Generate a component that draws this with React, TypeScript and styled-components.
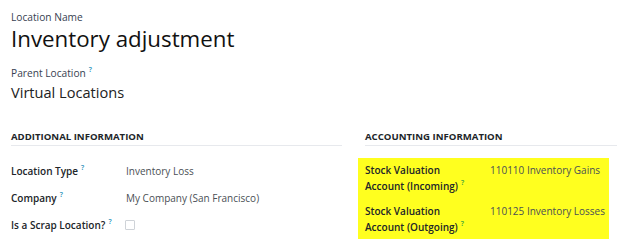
import React from 'react';
import styled, { createGlobalStyle } from 'styled-components';

const GlobalStyle = createGlobalStyle`
  body {
    margin: 0;
    background: #ffffff;
    font-family: "Open Sans", "Noto Sans", sans-serif;
    color: #212529;
  }
`;

const Sheet = styled.div`
  padding: 10px 0 0 11px;
  width: 617px;
  box-sizing: border-box;
`;

const SmallLabel = styled.div`
  font-size: 10.2px;
  font-weight: 500;
  color: #374151;
  line-height: 14px;
`;

const Title = styled.h1`
  margin: 1px 0 0 0;
  font-size: 22.3px;
  font-weight: 400;
  line-height: 28px;
  color: #111;
`;

const ParentLabel = styled(SmallLabel)`
  margin-top: 13px;
`;

const Subtitle = styled.div`
  margin-top: 2px;
  font-size: 14.6px;
  line-height: 20px;
  color: #222;
`;

const Columns = styled.div`
  display: grid;
  grid-template-columns: 331px 1fr;
  column-gap: 23px;
  margin-top: 28px;
`;

const Group = styled.section`
  display: flex;
  flex-direction: column;
`;

const GroupTitle = styled.div`
  font-size: 9.6px;
  font-weight: 700;
  text-transform: uppercase;
  color: #212529;
  line-height: 14px;
  padding-bottom: 1px;
  border-bottom: 1px solid #e7e9ed;
`;

const Fields = styled.div<{ $highlight?: boolean }>`
  display: flex;
  flex-direction: column;
  gap: ${(p) => (p.$highlight ? '9px' : '11px')};
  margin-top: ${(p) => (p.$highlight ? '12px' : '17px')};
  margin-left: ${(p) => (p.$highlight ? '-7px' : '0')};
  padding: ${(p) => (p.$highlight ? '4px 7px 4px 7px' : '0')};
  background: ${(p) => (p.$highlight ? '#ffff1f' : 'transparent')};
  width: ${(p) => (p.$highlight ? '251px' : 'auto')};
  box-sizing: border-box;
`;

const Field = styled.div<{ $labelWidth: number }>`
  display: grid;
  grid-template-columns: ${(p) => p.$labelWidth}px 1fr;
  align-items: start;
  min-height: 16px;
`;

const FieldLabel = styled.div`
  font-size: 10px;
  font-weight: 600;
  line-height: 16px;
  color: #212529;
  white-space: nowrap;
`;

const Help = styled.sup`
  font-size: 7px;
  font-weight: 600;
  color: #2a8fb8;
  margin-left: 3px;
  vertical-align: top;
  position: relative;
  top: -3px;
`;

const GreenHelp = styled(Help)`
  color: #3aa33c;
`;

const FieldValue = styled.div`
  font-size: 10px;
  line-height: 16px;
  color: #4a4f55;
  white-space: nowrap;
`;

const Checkbox = styled.span`
  display: block;
  width: 10px;
  height: 10px;
  box-sizing: border-box;
  border: 1px solid #cfd3d8;
  border-radius: 1px;
  margin: 3px 0 0 -1px;
`;

export default function App() {
  return (
    <>
      <GlobalStyle />
      <Sheet>
        <SmallLabel>Location Name</SmallLabel>
        <Title>Inventory adjustment</Title>
        <ParentLabel>
          Parent Location<Help>?</Help>
        </ParentLabel>
        <Subtitle>Virtual Locations</Subtitle>

        <Columns>
          <Group>
            <GroupTitle>Additional Information</GroupTitle>
            <Fields>
              <Field $labelWidth={115}>
                <FieldLabel>
                  Location Type<Help>?</Help>
                </FieldLabel>
                <FieldValue>Inventory Loss</FieldValue>
              </Field>
              <Field $labelWidth={115}>
                <FieldLabel>
                  Company<Help>?</Help>
                </FieldLabel>
                <FieldValue>My Company (San Francisco)</FieldValue>
              </Field>
              <Field $labelWidth={115}>
                <FieldLabel>
                  Is a Scrap Location?<Help>?</Help>
                </FieldLabel>
                <FieldValue>
                  <Checkbox />
                </FieldValue>
              </Field>
            </Fields>
          </Group>

          <Group>
            <GroupTitle>Accounting Information</GroupTitle>
            <Fields $highlight>
              <Field $labelWidth={125}>
                <FieldLabel>
                  Stock Valuation
                  <br />
                  Account (Incoming)<GreenHelp>?</GreenHelp>
                </FieldLabel>
                <FieldValue>110110 Inventory Gains</FieldValue>
              </Field>
              <Field $labelWidth={125}>
                <FieldLabel>
                  Stock Valuation
                  <br />
                  Account (Outgoing)<GreenHelp>?</GreenHelp>
                </FieldLabel>
                <FieldValue>110125 Inventory Losses</FieldValue>
              </Field>
            </Fields>
          </Group>
        </Columns>
      </Sheet>
    </>
  );
}
